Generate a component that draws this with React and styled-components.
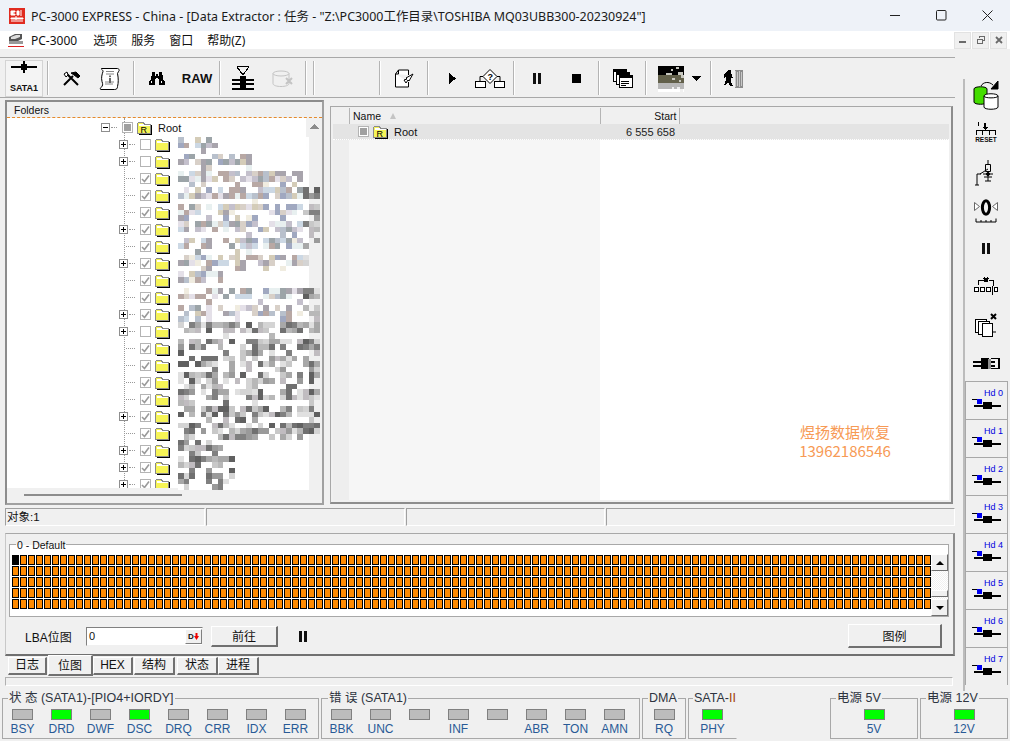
import React from "react";
import styled, { createGlobalStyle } from "styled-components";

const GlobalStyle = createGlobalStyle`
  html, body { margin: 0; padding: 0; background: #f0f0f0; }
  body { font-family: "Noto Sans", "Noto Sans CJK SC", sans-serif; overflow: hidden; }
`;

const UI_FONT = `"Liberation Sans", "Noto Sans CJK SC", sans-serif`;

const Window = styled.div`
  position: relative;
  width: 1010px;
  height: 741px;
  overflow: hidden;
  background: #f0f0f0;
  color: #111;
`;

const TitleBar = styled.div`
  height: 31px;
  display: flex;
  align-items: center;
  padding-left: 9px;
  background: #eef2f8;
  font-size: 12.44px;
  color: #1a1a1a;
  white-space: nowrap;
`;
const TitleText = styled.span`
  flex: 1;
  margin-left: 6px;
`;
const Caption = styled.div`
  width: 46px;
  height: 31px;
  display: flex;
  align-items: center;
  justify-content: center;
`;

const MenuBar = styled.div`
  height: 18px;
  display: flex;
  align-items: center;
  background: #fff;
  padding-left: 8px;
  font-size: 12px;
`;
const MenuItem = styled.span`
  margin-left: ${(p) => p.$gap}px;
  white-space: nowrap;
`;
const MdiButtons = styled.div`
  margin-left: auto;
  margin-right: 3px;
  display: flex;
  gap: 1px;
`;
const MdiButton = styled.div`
  width: 17px;
  height: 17px;
  display: flex;
  align-items: center;
  justify-content: center;
  background: #f0f0f0;
  border: 1px solid #e2e2e2;
  box-sizing: border-box;
`;

const Body = styled.div`
  display: flex;
  height: 643px;
`;
const Workspace = styled.div`
  width: 958px;
  display: flex;
  flex-direction: column;
`;

const Toolbar = styled.div`
  margin-top: 8px;
  height: 41px;
  width: 955px;
  display: flex;
  align-items: stretch;
  border-top: 1px solid #a8a8a8;
  border-bottom: 1px solid #a8a8a8;
  box-sizing: border-box;
  padding: 2px 0 0 0;
`;
const ToolGroup = styled.div`
  width: ${(p) => p.$w}px;
  flex: none;
  display: flex;
  align-items: center;
  justify-content: center;
`;
const ToolSep = styled.div`
  width: 2px;
  flex: none;
  background: #b4b4b4;
  border-right: 1px solid #fff;
  box-sizing: border-box;
  margin: 1px 0 2px;
`;
const Tool = styled.div`
  width: ${(p) => p.$w || 40}px;
  height: 36px;
  display: flex;
  align-items: center;
  justify-content: center;
  font: bold 13px ${UI_FONT};
`;
const ActiveTool = styled.div`
  width: 38px;
  height: 37px;
  margin-left: 5px;
  margin-right: auto;
  display: flex;
  align-items: center;
  justify-content: center;
  border: 1px solid #d4d4d4;
  box-sizing: border-box;
  background: #f4f4f4;
`;

const PanelRow = styled.div`
  display: flex;
  height: 410px;
  padding: 2px 0 0 5px;
  box-sizing: border-box;
`;
const TreePanel = styled.div`
  position: relative;
  width: 319px;
  height: 405px;
  box-sizing: border-box;
  border: 2px solid;
  border-color: #8c8c8c #a0a0a0 #a0a0a0 #8c8c8c;
  overflow: hidden;
`;
const TreeHeader = styled.div`
  height: 16px;
  padding-left: 7px;
  font: 10.5px/17px ${UI_FONT};
  border-bottom: 1px dashed #e58a2c;
  box-sizing: border-box;
  background: #f0f0f0;
`;
const TreeBody = styled.div`
  display: flex;
  height: 370px;
`;
const TreeList = styled.div`
  position: relative;
  width: 299px;
  background: #fff;
  overflow: hidden;
  padding-top: 1px;
  box-sizing: border-box;
`;
const GuideLine = styled.div`
  position: absolute;
  left: 117px;
  top: 0;
  bottom: 0;
  border-left: 1px dotted #999;
`;
const TreeRow = styled.div`
  position: relative;
  height: 17px;
  display: flex;
  align-items: center;
  padding-left: ${(p) => (p.$root ? 94 : 112)}px;
  font: 11px ${UI_FONT};
`;
const Expander = styled.div`
  width: 9px;
  height: 9px;
  flex: none;
  border: 1px solid #8e8e8e;
  background: #fff;
  box-sizing: border-box;
  display: flex;
  align-items: center;
  justify-content: center;
  position: relative;
  &::before {
    content: "";
    position: absolute;
    width: 5px;
    height: 1px;
    background: #000;
  }
  &::after {
    content: "";
    position: absolute;
    width: 1px;
    height: 5px;
    background: #000;
    display: ${(p) => (p.$open ? "none" : "block")};
  }
`;
const NoExpander = styled.div`
  width: 6px;
  flex: none;
`;
const Dots = styled.div`
  width: ${(p) => (p.$long ? 9 : 6)}px;
  margin: 0 5px 0 1px;
  flex: none;
  border-top: 1px dotted #999;
`;
const CheckBox = styled.div`
  width: 11px;
  height: 11px;
  flex: none;
  box-sizing: border-box;
  border: 1px solid #b4b4b4;
  background: #fff;
  display: flex;
  align-items: center;
  justify-content: center;
`;
const RootCheck = styled.div`
  width: 7px;
  height: 7px;
  background: #a0a0a0;
`;
const FolderSlot = styled.div`
  width: 15px;
  height: 14px;
  margin: 0 0 0 4px;
  flex: none;
`;
const RootLabel = styled.span`
  margin-left: 6px;
`;
const TreeScroll = styled.div`
  width: 16px;
  display: flex;
  justify-content: center;
  padding-top: 6px;
  box-sizing: border-box;
`;
const HorizontalBar = styled.div`
  height: 15px;
  padding-left: 17px;
  display: flex;
  align-items: center;
`;
const HorizontalThumb = styled.div`
  width: 158px;
  height: 2px;
  margin-top: -1px;
  background: #8c8c8c;
`;
const Mosaic = styled.svg`
  position: absolute;
  left: 171px;
  top: 35px;
`;

const ListFrame = styled.div`
  width: 623px;
  height: 398px;
  margin: 6px 0 0 6px;
  padding: 1px 2px 2px 2px;
  box-sizing: border-box;
  border: 1px solid #a8a8a8;
  border-right: 2px solid #8c8c8c;
  border-bottom: 2px solid #8c8c8c;
  background: #f0f0f0;
  display: flex;
  flex-direction: column;
  position: relative;
`;
const ListHead = styled.div`
  height: 16px;
  display: flex;
  font: 10.5px/16px ${UI_FONT};
  box-sizing: border-box;
`;
const HeadCell = styled.div`
  width: ${(p) => p.$w}px;
  box-sizing: border-box;
  padding: 0 3px;
  border-left: 1px solid #b4b4b4;
  display: flex;
  align-items: center;
  justify-content: ${(p) => (p.$right ? "flex-end" : "flex-start")};
  gap: 9px;
  &:first-child { border-left: none; }
`;
const SortMark = styled.span`
  width: 0;
  height: 0;
  border-left: 3px solid transparent;
  border-right: 3px solid transparent;
  border-bottom: 6px solid #c4c4c4;
`;
const ListColumns = styled.div`
  flex: 1;
  display: flex;
  min-height: 0;
`;
const Gutter = styled.div`
  width: 16px;
  background: #eeeeee;
  box-sizing: border-box;
`;
const ListBody = styled.div`
  flex: 1;
  position: relative;
  background: linear-gradient(to right, #f6f6f6 0 251px, #fff 251px);
`;
const ListRow = styled.div`
  height: 16px;
  display: flex;
  align-items: center;
  margin-left: -16px;
  background: #e4e4e4;
  border-bottom: 1px dotted #fff;
  box-sizing: border-box;
  font: 11px ${UI_FONT};
`;
const ListName = styled.div`
  width: 267px;
  padding-left: 25px;
  box-sizing: border-box;
  display: flex;
  align-items: center;
`;
const ListStart = styled.div`
  width: 80px;
  padding-right: 5px;
  text-align: right;
  box-sizing: border-box;
  color: #222;
`;
const Watermark = styled.div`
  position: absolute;
  left: 466px;
  top: 315px;
  width: 96px;
  text-align: center;
  color: #f79a55;
  font-size: 15px;
  line-height: 19px;
  font-family: "Noto Sans CJK SC", sans-serif;
`;

const StatusStrip = styled.div`
  height: 18px;
  margin: 0 0 0 5px;
  width: 950px;
  display: flex;
  gap: 1px;
`;
const StatusCell = styled.div`
  width: ${(p) => p.$w}px;
  ${(p) => p.$fill && "flex: 1;"}
  box-sizing: border-box;
  border-top: 1px solid #a0a0a0;
  border-left: 1px solid #a0a0a0;
  border-right: 1px solid #fff;
  border-bottom: 1px solid #fff;
  font: 11.5px/17px ${UI_FONT};
  padding-left: 1px;
`;

const BitmapPanel = styled.div`
  margin: 7px 0 0 5px;
  width: 950px;
  height: 123px;
  box-sizing: border-box;
  border: 1px solid #c8c8c8;
  border-top: 1px solid #a8a8a8;
  border-right: 2px solid #8c8c8c;
  border-bottom: 2px solid #707070;
  padding: 10px 4px 0 3px;
  display: flex;
  flex-direction: column;
`;
const LegendFrame = styled.div`
  position: relative;
  height: 73px;
  flex: none;
  box-sizing: border-box;
  border: 1px solid #a8a8a8;
  background: #fff;
  padding: 10px 0 0 2px;
  display: flex;
`;
const FrameTitle = styled.span`
  position: absolute;
  left: 6px;
  top: -7px;
  font: 10.5px/14px ${UI_FONT};
  background: linear-gradient(to bottom, #f0f0f0 50%, #fff 50%);
  padding: 0 1px;
`;
const BitGrid = styled.div`
  width: 920px;
  height: 55px;
  display: grid;
  grid-template-columns: repeat(115, 8px);
  grid-auto-rows: 11px;
`;
const Bit = styled.div`
  width: 7px;
  height: 10px;
  box-sizing: border-box;
  border: 1px solid #000;
  background: ${(p) => (p.$used ? "#000" : "#ff8a00")};
`;
const VScroll = styled.div`
  position: absolute;
  right: 0;
  top: 9px;
  width: 17px;
  height: 62px;
  display: flex;
  flex-direction: column;
  background: repeating-conic-gradient(#f0f0f0 0 25%, #fff 0 50%) 0 0 / 2px 2px;
`;
const ScrollBtn = styled.div`
  width: 17px;
  height: ${(p) => p.$h || 17}px;
  box-sizing: border-box;
  background: #f0f0f0;
  border: 1px solid;
  border-color: #fff #707070 #707070 #fff;
  display: flex;
  align-items: center;
  justify-content: center;
  margin-top: ${(p) => p.$top || 0}px;
`;
const ArrowGlyph = styled.span`
  width: 0;
  height: 0;
  border-left: 4px solid transparent;
  border-right: 4px solid transparent;
  ${(p) => (p.$down ? "border-top: 4px solid #000;" : "border-bottom: 4px solid #000;")}
`;
const LbaRow = styled.div`
  flex: 1;
  display: flex;
  align-items: center;
  font: 12px ${UI_FONT};
  padding-top: 1px;
`;
const LbaLabel = styled.span`
  width: 77px;
  padding-left: 16px;
  box-sizing: border-box;
  white-space: nowrap;
`;
const LbaInput = styled.div`
  width: 117px;
  height: 19px;
  box-sizing: border-box;
  background: #fff;
  border: 1px solid;
  border-color: #808080 #f0f0f0 #f0f0f0 #808080;
  display: flex;
  align-items: center;
  justify-content: space-between;
  padding-left: 2px;
  font-size: 11px;
`;
const LbaArrow = styled.div`
  width: 17px;
  height: 15px;
  box-sizing: border-box;
  background: #f0f0f0;
  border: 1px solid;
  border-color: #fff #808080 #808080 #fff;
  display: flex;
  align-items: center;
  justify-content: center;
  font: bold 8px/9px ${UI_FONT};
`;
const RaisedButton = styled.div`
  width: ${(p) => p.$w}px;
  height: ${(p) => p.$h}px;
  box-sizing: border-box;
  margin-left: ${(p) => p.$ml || 0}px;
  background: #f0f0f0;
  border: solid;
  border-color: #fff #707070 #707070 #fff;
  border-width: 1px 2px 2px 1px;
  display: flex;
  align-items: center;
  justify-content: center;
  font-size: 12px;
`;
const PauseGlyph = styled.div`
  margin-left: 21px;
  width: 8px;
  height: 11px;
  border-left: 3px solid #111;
  border-right: 3px solid #111;
  box-sizing: border-box;
`;
const Spacer = styled.div`
  flex: 1;
`;
const RightGap = styled.div`
  width: 7px;
  flex: none;
`;

const TabRow = styled.div`
  margin-left: 8px;
  height: 19px;
  display: flex;
  align-items: flex-start;
  font: 12px ${UI_FONT};
`;
const Tab = styled.div`
  width: ${(p) => p.$w}px;
  margin-left: ${(p) => p.$ml || 0}px;
  height: ${(p) => (p.$active ? 21 : 18)}px;
  margin-top: ${(p) => (p.$active ? -1 : 1)}px;
  box-sizing: border-box;
  border: solid;
  border-color: #fff #707070 #707070 #fff;
  border-width: 1px 2px 2px 1px;
  background: #f0f0f0;
  text-align: center;
  line-height: ${(p) => (p.$active ? 20 : 15)}px;
  overflow: hidden;
  white-space: nowrap;
`;
const ProgressStrip = styled.div`
  margin: 2px 0 0 5px;
  width: 948px;
  height: 9px;
  box-sizing: border-box;
  border: 1px solid;
  border-color: #b0b0b0 #fff #fff #b0b0b0;
`;

const SideBar = styled.div`
  width: 47px;
  margin: 30px 0 0 5px;
  border-left: 2px solid #bcbcbc;
  box-sizing: border-box;
  display: flex;
  flex-direction: column;
  align-items: stretch;
`;
const SideTool = styled.div`
  height: ${(p) => p.$h}px;
  display: flex;
  align-items: center;
  justify-content: center;
  padding-right: 3px;
`;
const DriveButton = styled.div`
  height: 38px;
  margin-right: 2px;
  box-sizing: border-box;
  border: solid #a8a8a8;
  border-width: 1px 1px 0 1px;
  position: relative;
  background: #f0f0f0;
  &:first-of-type { margin-top: 1px; }
`;
const DriveLabel = styled.span`
  position: absolute;
  left: 18px;
  top: 6px;
  color: #0000e0;
  font: 9px/11px ${UI_FONT};
  white-space: nowrap;
`;
const DriveGlyph = styled.svg`
  position: absolute;
  left: 6px;
  top: 17px;
`;

const Indicators = styled.div`
  display: flex;
  height: 49px;
  padding-left: 2px;
  box-sizing: border-box;
  font: 12px ${UI_FONT};
`;
const Group = styled.div`
  position: relative;
  width: ${(p) => p.$w}px;
  margin-left: ${(p) => p.$ml || 0}px;
  height: 41px;
  margin-top: 6px;
  box-sizing: border-box;
  border: 1px solid #a8a8a8;
  border-right-color: ${(p) => (p.$open ? "#f0f0f0" : "#a8a8a8")};
  display: grid;
  grid-template-columns: repeat(${(p) => p.$cols || 1}, 39px);
  justify-content: ${(p) => (p.$cols ? "start" : "center")};
  padding-top: 10px;
`;
const GroupTitle = styled.span`
  position: absolute;
  left: ${(p) => p.$left}px;
  top: -8px;
  padding: 0 1px;
  background: #f0f0f0;
  color: #2e3440;
  font-size: 12.5px;
  line-height: 14px;
  white-space: nowrap;
`;
const Led = styled.div`
  display: flex;
  flex-direction: column;
  align-items: center;
  gap: 2px;
  color: #285a96;
  font-size: 12px;
  line-height: 14px;
  min-height: 0;
`;
const Lamp = styled.div`
  width: 21px;
  height: 11px;
  box-sizing: border-box;
  border: 1px solid #808080;
  background: ${(p) => (p.$on ? "#00ff00" : "#bcbcbc")};
`;
const Roman = styled.span`
  color: #a04000;
`;

/* --- drawings --- */
const Px = styled.svg`
  display: block;
  shape-rendering: crispEdges;
`;
const Stack = styled.div`
  text-align: center;
`;
const StackedSvg = styled(Px)`
  margin: 0 auto 1px;
`;
const SataLabel = styled.span`
  font: bold 9px/10px ${UI_FONT};
`;
const ResetLabel = styled.span`
  display: block;
  font: bold 6.5px/8px ${UI_FONT};
`;

const AppIcon = () => (
  <svg width="16" height="16" viewBox="0 0 16 16">
    <rect width="16" height="16" fill="#e02b20" />
    <path d="M2 3h4v1H4v2h2v1H2zM8 3h2v4H8zM12 2v6M2 10h12v1H2zM7 8v4M2 13h12" stroke="#fff" strokeWidth="1" fill="#fff" />
  </svg>
);
const MenuIcon = () => (
  <svg width="16" height="14" viewBox="0 0 16 14">
    <path d="M1 4l6-3h7v5l-6 3H1z" fill="#555" />
    <path d="M3 4l5-2h4v2l-5 2H3z" fill="#ddd" />
    <rect x="1" y="8" width="14" height="3" fill="#999" />
    <rect x="0" y="13" width="16" height="1" fill="#d22" />
  </svg>
);
const SataIcon = () => (
  <Stack>
    <StackedSvg width="28" height="12" viewBox="0 0 28 12">
      <rect x="1" y="5" width="26" height="2" fill="#000" />
      <rect x="11" y="3" width="6" height="6" fill="#000" />
      <rect x="13" y="0" width="2" height="12" fill="#000" />
    </StackedSvg>
    <SataLabel>SATA1</SataLabel>
  </Stack>
);
const ToolsIcon = () => (
  <svg width="18" height="16" viewBox="0 0 18 16" fill="none" stroke="#000">
    <path d="M1 14L10 5M3 2l12 12" strokeWidth="2" />
    <path d="M8 2l5-1 4 4-2 2-4-3z" fill="#000" strokeWidth="1" />
    <path d="M1 3l3-2 1 3-2 2z" fill="#fff" strokeWidth="1" />
  </svg>
);
const ScrollIcon = () => (
  <svg width="22" height="24" viewBox="0 0 22 24" fill="#fff" stroke="#000">
    <path d="M2.5 1.5h16c2 0 2 3 1 3l-1 2c1 5 1 9 0 13 0 2-1 3-3 3H2c-1 0-1-1 0-2 2-2 2-3 1-6-1-4 0-7 1-10 0-2-2-2-1.5-3z" />
    <path d="M7 4.5h8M7 7h8M6 15h9M6 17h8" stroke="#888" />
    <rect x="10" y="11" width="2" height="5" fill="#666" stroke="none" />
    <rect x="10" y="8.5" width="2" height="1.6" fill="#666" stroke="none" />
  </svg>
);
const BinocularIcon = () => (
  <Px width="16" height="14" viewBox="0 0 16 14">
    <path d="M3 0h3v4h4V0h3v3l1 1v3l2 3v3h-6V7H9V6H7v1H6v6H0v-3l2-3V4l1-1z" fill="#000" />
    <rect x="7" y="2" width="2" height="2" fill="#000" />
    <rect x="2" y="9" width="1" height="2" fill="#fff" />
    <rect x="12" y="9" width="1" height="2" fill="#fff" />
  </Px>
);
const ValveIcon = () => (
  <Px width="24" height="26" viewBox="0 0 24 26">
    <path d="M6 0.5h12M6 1l6 8 6-8" fill="none" stroke="#000" />
    <rect x="1" y="13" width="22" height="2" fill="#000" />
    <rect x="1" y="17" width="22" height="2" fill="#000" />
    <rect x="1" y="22" width="22" height="2" fill="#000" />
    <rect x="9" y="10" width="6" height="13" fill="#000" />
  </Px>
);
const DiskOffIcon = () => (
  <svg width="24" height="18" viewBox="0 0 24 18" fill="none" stroke="#c4c4c4">
    <ellipse cx="10" cy="3.5" rx="8" ry="2.5" />
    <path d="M2 3.5v10c0 2 4 3 8 3s8-1 8-3v-10" />
    <path d="M15 8l3 3m3-3l-3 3m0 0l3 3m-3-3l-3 3" strokeWidth="2" />
  </svg>
);
const DocIcon = () => (
  <svg width="21" height="19" viewBox="0 0 21 19" fill="#fff" stroke="#000">
    <path d="M1.5 5l3-4h10v5M1.5 5h3V1M1.5 5v13h13v-5" />
    <path d="M19 5l-7 4 1 1-3 1 2 3 2-3 1 1z" fill="#fff" />
  </svg>
);
const PlayIcon = () => (
  <Px width="7" height="11" viewBox="0 0 7 11">
    <path d="M0 0l7 5.5L0 11z" fill="#000" />
  </Px>
);
const FlowIcon = () => (
  <svg width="30" height="20" viewBox="0 0 30 20" fill="#fff" stroke="#000" strokeWidth="1">
    <path d="M15 0.5l7 7-7 7-7-7z" />
    <rect x="0.5" y="12.5" width="10" height="6" />
    <rect x="19.5" y="12.5" width="10" height="6" />
    <path d="M8 7.5H5v5M22 7.5h3v5" fill="none" />
    <text x="12.6" y="11" fontSize="9" fontWeight="bold" fontFamily="Liberation Sans" fill="#000" stroke="none">?</text>
  </svg>
);
const PauseIcon = () => (
  <Px width="8" height="11" viewBox="0 0 8 11">
    <rect width="3" height="11" fill="#111" />
    <rect x="5" width="3" height="11" fill="#111" />
  </Px>
);
const StopIcon = () => (
  <Px width="9" height="9" viewBox="0 0 9 9">
    <rect width="9" height="9" fill="#000" />
  </Px>
);
const WindowsIcon = () => (
  <Px width="20" height="20" viewBox="0 0 20 20">
    {[0, 3, 6].map((d) => (
      <g key={d} transform={`translate(${d} ${d})`}>
        <rect x="0.5" y="0.5" width="13" height="12" fill="#fff" stroke="#000" />
        <rect x="1" y="1" width="12" height="2" fill="#000" />
      </g>
    ))}
    <path d="M8 12h8M8 14h8M8 16h5" stroke="#000" />
  </Px>
);
const PictureIcon = () => (
  <Px width="26" height="26" viewBox="0 0 26 26">
    <rect width="26" height="9" fill="#000" />
    <rect y="9" width="26" height="8" fill="#62604a" />
    <rect y="17" width="26" height="6" fill="#b8b8b8" />
    <rect y="23" width="26" height="3" fill="#fff" />
    <path d="M13 3h2v2h-2zM18 1h3v2h-3zM8 7h6v2H8zM20 6h5v3h-5zM21 14h2v2h-2zM23 9h3v3h-3zM14 12h3v2h-3z" fill="#c8c8c0" />
    <path d="M19 21h3v2h-3zM22 23h3v3h-3zM14 21h2v2h-2z" fill="#f0f0f0" />
  </Px>
);
const DownCaret = () => (
  <Px width="9" height="5" viewBox="0 0 9 5">
    <path d="M0 0h9L4.5 5z" fill="#000" />
  </Px>
);
const WalkIcon = () => (
  <Px width="19" height="18" viewBox="0 0 19 18">
    <path d="M4 0h3v3H6l2 2 1 3H7v4l2 4H6l-2-4-2 3H0l2-5V6L0 8V5z" fill="#000" />
    <rect x="11" y="0" width="8" height="18" fill="#8c8c8c" />
    <path d="M11 1h1v16h-1zM13 2h1v14h-1zM15 1h1v16h-1zM17 2h1v14h-1z" fill="#c8c8c8" />
  </Px>
);
const FolderIcon = ({ root }) => (
  <Px width="15" height="14" viewBox="0 0 15 14">
    <rect x="14" y="4" width="1" height="10" fill="#000" />
    <rect x="2" y="13" width="13" height="1" fill="#000" />
    <path d="M0.5 12.5V2.5l1-1h5l1 2h6v9z" fill="#f6f456" stroke="#8a8a8a" />
    <path d="M2 3h4.5l.5 1h6v1H2z" fill="#fff" />
    {root && <text x="3.5" y="11.5" fontSize="9" fontFamily="Liberation Sans" fill="#000" stroke="none">R</text>}
  </Px>
);
const CheckMark = () => (
  <svg width="9" height="9" viewBox="0 0 9 9" fill="none" stroke="#9a9a9a" strokeWidth="1.6">
    <path d="M1 5l2.5 2.5L8 1.5" />
  </svg>
);
const ScrollUp = () => (
  <Px width="9" height="5" viewBox="0 0 9 5">
    <path d="M4.5 0L9 5H0z" fill="#8c8c8c" />
  </Px>
);

const DbSwapIcon = () => (
  <svg width="26" height="30" viewBox="0 0 26 30" stroke="#000">
    <path d="M1 8c0-3 13-3 13 0v13c0 3-13 3-13 0z" fill="#44dd00" />
    <path d="M11 15c0-3 14-3 14 0v11c0 3-14 3-14 0z" fill="#fff" />
    <path d="M11 15c0 2.5 14 2.5 14 0" fill="none" />
    <path d="M8 5c2-4 8-5 12-1" fill="none" />
    <path d="M25 0v8h-7z" fill="#000" />
  </svg>
);
const ResetIcon = () => (
  <Stack>
    <StackedSvg width="20" height="13" viewBox="0 0 20 13">
      <path d="M2 0h1v4H2zM8 1h2v4h2L9 8 6 5h2z" fill="#000" />
      <rect x="0.5" y="8.5" width="19" height="4.5" fill="none" stroke="#000" />
      <path d="M6.5 8v5M13.5 8v5" stroke="#000" />
    </StackedSvg>
    <ResetLabel>RESET</ResetLabel>
  </Stack>
);
const SwitchIcon = () => (
  <svg width="24" height="26" viewBox="0 0 24 26" fill="none" stroke="#000">
    <path d="M1 25h4M3 25V14h4M6 14l8-5M14 0v4M11.5 4.5h5v7h-5zM14 12v9M9 14h10M10 17h8M11 21h6" />
    <circle cx="14" cy="14" r="1.5" fill="#000" />
  </svg>
);
const ZeroIcon = () => (
  <svg width="24" height="24" viewBox="0 0 24 24">
    <path d="M0.5 3.5l5 4-5 4z M23.5 3.5l-5 4 5 4z" fill="#fff" stroke="#666" />
    <ellipse cx="12" cy="8.5" rx="3.6" ry="6.8" fill="none" stroke="#000" strokeWidth="3" />
    <path d="M2 19.5v3.5h20v-3.5M7 21v2M12 21v2M17 21v2" fill="none" stroke="#000" />
  </svg>
);
const BitsIcon = () => (
  <Px width="24" height="18" viewBox="0 0 24 18">
    <path d="M4 8V3.5h6M15 3.5h4V9" fill="none" stroke="#000" />
    <path d="M10 1l4 4M14 1l-4 4" stroke="#000" strokeWidth="2" />
    <path d="M0.5 10.5h4v4h-4zM6.5 10.5h4v4h-4zM12.5 10.5h4v4h-4zM20.5 10.5h3v4h-3z" fill="#fff" stroke="#000" />
    <rect x="18" y="9" width="1" height="9" fill="#000" />
  </Px>
);
const PagesIcon = () => (
  <svg width="24" height="24" viewBox="0 0 24 24" stroke="#000" fill="#fff">
    <rect x="1.5" y="6.5" width="11" height="13" />
    <rect x="4.5" y="8.5" width="11" height="13" />
    <rect x="8.5" y="10.5" width="10" height="13" />
    <path d="M19 19h3" />
    <path d="M17 1l5 5m0-5l-5 5" strokeWidth="2" />
  </svg>
);
const ProbeIcon = () => (
  <Px width="27" height="13" viewBox="0 0 27 13">
    <rect x="0" y="4" width="22" height="2" fill="#000" />
    <rect x="0" y="8" width="22" height="2" fill="#000" />
    <rect x="8" y="1" width="8" height="11" fill="#000" />
    <rect x="15" y="2" width="3" height="10" fill="#909090" />
    <path d="M18 1.5h8v10h-8M25.5 1v11" fill="none" stroke="#000" />
  </Px>
);
const MinIcon = styled(Px)`
  margin-top: 5px;
`;
const RestoreIcon = () => (
  <Px width="8" height="8" viewBox="0 0 8 8">
    <path d="M2.5 2V.5h5v4H6M.5 3h5v4.5h-5z" fill="none" stroke="#6a6a6a" />
  </Px>
);
const CloseIcon = () => (
  <svg width="8" height="8" viewBox="0 0 8 8">
    <path d="M1 1l6 6M7 1L1 7" stroke="#6a6a6a" strokeWidth="1.8" />
  </svg>
);
const DownRed = () => (
  <>
    <span>D</span>
    <svg width="5" height="7" viewBox="0 0 5 7"><path d="M1.5 0h2v3H5L2.5 7 0 3h1.5z" fill="#e00" /></svg>
  </>
);

/* --- data --- */
const treeRows = [
  { x: 1, c: 0 }, { x: 1, c: 0 }, { x: 0, c: 1 }, { x: 0, c: 1 }, { x: 0, c: 1 },
  { x: 1, c: 1 }, { x: 0, c: 1 }, { x: 1, c: 1 }, { x: 0, c: 1 }, { x: 0, c: 1 },
  { x: 1, c: 1 }, { x: 1, c: 0 }, { x: 0, c: 1 }, { x: 0, c: 1 }, { x: 0, c: 1 },
  { x: 0, c: 1 }, { x: 1, c: 1 }, { x: 0, c: 1 }, { x: 1, c: 1 }, { x: 1, c: 1 },
  { x: 1, c: 1 },
];

// blurred file names: how many mosaic blocks wide each tree row is
const mosaicWidths = [7, 13, 22, 25, 25, 25, 25, 23, 8, 25, 25, 25, 25, 25, 25, 25, 25, 25, 8, 10, 10];
const pastel = ["#a8a4ac", "#c4c0cc", "#b8c0cc", "#d8d0c8", "#ccd8e4", "#e4e0e8", "#9ca4a8", "#b8a8a4", "#d4ccb8", "#a0a8c0", "#f0ece0", "#e8f0f0"];
const greys = ["#9a9a9a", "#b8b8b8", "#c8c8c8", "#a8a8a8", "#e0e0e0", "#d4d4d4", "#808080", "#707070", "#c0bcc0", "#606060"];

const buildMosaic = () => {
  let seed = 17;
  const next = () => {
    seed = (seed * 16807) % 2147483647;
    return seed / 2147483647;
  };
  const cells = [];
  mosaicWidths.forEach((w, item) => {
    for (let r = 0; r < 3; r++) {
      for (let col = 0; col < w; col++) {
        const edge = col >= 22;
        const density = r === 2 ? 0.3 : 0.72;
        if (next() > density) continue;
        const palette = edge || item >= 11 ? greys : pastel;
        cells.push({ x: col, y: item * 3 + r, fill: palette[Math.floor(next() * palette.length)] });
      }
    }
  });
  return cells;
};
const mosaicCells = buildMosaic();
const bits = Array.from({ length: 575 }, (_, i) => i);

const statusLeds = [["BSY"], ["DRD", 1], ["DWF"], ["DSC", 1], ["DRQ"], ["CRR"], ["IDX"], ["ERR"]];
const errorLeds = ["BBK", "UNC", "", "INF", "", "ABR", "TON", "AMN"];
const sideToolHeights = [34, 40, 40, 36, 38, 38, 40, 36];
const sideIcons = [DbSwapIcon, ResetIcon, SwitchIcon, ZeroIcon, PauseIcon, BitsIcon, PagesIcon, ProbeIcon];

const TreeItem = ({ row }) => (
  <TreeRow>
    {row.x ? <Expander /> : <NoExpander />}
    <Dots $long={!row.x} />
    <CheckBox>{row.c ? <CheckMark /> : null}</CheckBox>
    <FolderSlot>
      <FolderIcon />
    </FolderSlot>
  </TreeRow>
);

const App = () => (
  <Window>
    <GlobalStyle />
    <TitleBar>
      <AppIcon />
      <TitleText>PC-3000 EXPRESS - China - [Data Extractor : 任务 - "Z:\PC3000工作目录\TOSHIBA MQ03UBB300-20230924"]</TitleText>
      <Caption>
        <svg width="11" height="11" viewBox="0 0 11 11"><path d="M0 5.5h10" stroke="#222" /></svg>
      </Caption>
      <Caption>
        <svg width="11" height="11" viewBox="0 0 11 11"><rect x="0.5" y="0.5" width="9.5" height="9.5" rx="1" fill="none" stroke="#222" /></svg>
      </Caption>
      <Caption>
        <svg width="11" height="11" viewBox="0 0 11 11"><path d="M0.5 0.5l10 10m0-10l-10 10" stroke="#222" /></svg>
      </Caption>
    </TitleBar>

    <MenuBar>
      <MenuIcon />
      <MenuItem $gap={7}>PC-3000</MenuItem>
      <MenuItem $gap={16}>选项</MenuItem>
      <MenuItem $gap={14}>服务</MenuItem>
      <MenuItem $gap={14}>窗口</MenuItem>
      <MenuItem $gap={14}>帮助(Z)</MenuItem>
      <MdiButtons>
        <MdiButton>
          <MinIcon width="7" height="3" viewBox="0 0 7 3"><rect width="7" height="2" fill="#6a6a6a" /></MinIcon>
        </MdiButton>
        <MdiButton><RestoreIcon /></MdiButton>
        <MdiButton><CloseIcon /></MdiButton>
      </MdiButtons>
    </MenuBar>

    <Body>
      <Workspace>
        <Toolbar>
          <ToolGroup $w={47}><ActiveTool><SataIcon /></ActiveTool></ToolGroup>
          <ToolSep />
          <ToolGroup $w={84}>
            <Tool $w={38}><ToolsIcon /></Tool>
            <Tool $w={38}><ScrollIcon /></Tool>
          </ToolGroup>
          <ToolSep />
          <ToolGroup $w={84}>
            <Tool><BinocularIcon /></Tool>
            <Tool>RAW</Tool>
          </ToolGroup>
          <ToolSep />
          <ToolGroup $w={84}>
            <Tool><ValveIcon /></Tool>
            <Tool><DiskOffIcon /></Tool>
          </ToolGroup>
          <ToolSep />
          <ToolGroup $w={6} />
          <ToolSep />
          <ToolGroup $w={64} />
          <ToolSep />
          <ToolGroup $w={46}><Tool><DocIcon /></Tool></ToolGroup>
          <ToolSep />
          <ToolGroup $w={84}>
            <Tool $w={38}><PlayIcon /></Tool>
            <Tool $w={38}><FlowIcon /></Tool>
          </ToolGroup>
          <ToolSep />
          <ToolGroup $w={83}>
            <Tool $w={39}><PauseIcon /></Tool>
            <Tool $w={39}><StopIcon /></Tool>
          </ToolGroup>
          <ToolSep />
          <ToolGroup $w={45}><Tool><WindowsIcon /></Tool></ToolGroup>
          <ToolSep />
          <ToolGroup $w={63}>
            <Tool $w={36}><PictureIcon /></Tool>
            <Tool $w={16}><DownCaret /></Tool>
          </ToolGroup>
          <ToolSep />
          <ToolGroup $w={42}><Tool><WalkIcon /></Tool></ToolGroup>
        </Toolbar>

        <PanelRow>
          <TreePanel>
            <TreeHeader>Folders</TreeHeader>
            <TreeBody>
              <TreeList>
                <GuideLine />
                <TreeRow $root>
                  <Expander $open />
                  <Dots />
                  <CheckBox><RootCheck /></CheckBox>
                  <FolderSlot><FolderIcon root /></FolderSlot>
                  <RootLabel>Root</RootLabel>
                </TreeRow>
                {treeRows.map((row, i) => (
                  <TreeItem key={i} row={row} />
                ))}
              </TreeList>
              <TreeScroll><ScrollUp /></TreeScroll>
            </TreeBody>
            <HorizontalBar><HorizontalThumb /></HorizontalBar>
            <Mosaic width="142" height="353" viewBox="0 0 25 63" preserveAspectRatio="none" shapeRendering="crispEdges">
              <rect x="0" y="0" width="23" height="63" fill="#fff" />
              {mosaicCells.map((c, i) => (
                <rect key={i} x={c.x} y={c.y} width="1" height="1" fill={c.fill} />
              ))}
            </Mosaic>
          </TreePanel>

          <ListFrame>
            <ListHead>
              <HeadCell $w={16} />
              <HeadCell $w={251}>Name <SortMark /></HeadCell>
              <HeadCell $w={80} $right>Start</HeadCell>
              <HeadCell $w={270} />
            </ListHead>
            <ListColumns>
              <Gutter />
              <ListBody>
                <ListRow>
                  <ListName>
                    <CheckBox><RootCheck /></CheckBox>
                    <FolderSlot><FolderIcon root /></FolderSlot>
                    <RootLabel>Root</RootLabel>
                  </ListName>
                  <ListStart>6 555 658</ListStart>
                </ListRow>
              </ListBody>
            </ListColumns>
            <Watermark>煜扬数据恢复<br />13962186546</Watermark>
          </ListFrame>
        </PanelRow>

        <StatusStrip>
          <StatusCell $w={200}>对象:1</StatusCell>
          <StatusCell $w={199} />
          <StatusCell $w={199} />
          <StatusCell $fill />
        </StatusStrip>

        <BitmapPanel>
          <LegendFrame>
            <FrameTitle>0 - Default</FrameTitle>
            <BitGrid>
              {bits.map((i) => (
                <Bit key={i} $used={i === 0} />
              ))}
            </BitGrid>
            <VScroll>
              <ScrollBtn><ArrowGlyph /></ScrollBtn>
              <ScrollBtn $h={7} $top={19} />
              <ScrollBtn $top={2}><ArrowGlyph $down /></ScrollBtn>
            </VScroll>
          </LegendFrame>
          <LbaRow>
            <LbaLabel>LBA位图</LbaLabel>
            <LbaInput>
              0
              <LbaArrow><DownRed /></LbaArrow>
            </LbaInput>
            <RaisedButton $w={67} $h={21} $ml={8}>前往</RaisedButton>
            <PauseGlyph />
            <Spacer />
            <RaisedButton $w={94} $h={24}>图例</RaisedButton>
            <RightGap />
          </LbaRow>
        </BitmapPanel>

        <TabRow>
          <Tab $w={39}>日志</Tab>
          <Tab $w={45} $ml={1} $active>位图</Tab>
          <Tab $w={40}>HEX</Tab>
          <Tab $w={41} $ml={1}>结构</Tab>
          <Tab $w={41} $ml={2}>状态</Tab>
          <Tab $w={41}>进程</Tab>
        </TabRow>
        <ProgressStrip />
      </Workspace>

      <SideBar>
        {sideIcons.map((Icon, i) => (
          <SideTool key={i} $h={sideToolHeights[i]}><Icon /></SideTool>
        ))}
        {[0, 1, 2, 3, 4, 5, 6, 7].map((n) => (
          <DriveButton key={n}>
            <DriveLabel>Hd {n}</DriveLabel>
            <DriveGlyph width="29" height="12" viewBox="0 0 29 12" shapeRendering="crispEdges">
              <rect x="0" y="0" width="6" height="1" fill="#000" />
              <rect x="5" y="0" width="5" height="5" fill="#0000f0" />
              <rect x="2" y="6" width="27" height="2" fill="#000" />
              <rect x="11" y="3" width="9" height="7" fill="#000" />
            </DriveGlyph>
          </DriveButton>
        ))}
      </SideBar>
    </Body>

    <Indicators>
      <Group $w={317} $cols={8}>
        <GroupTitle $left={5}>状 态 (SATA1)-[PIO4+IORDY]</GroupTitle>
        {statusLeds.map(([name, on]) => (
          <Led key={name}>
            <Lamp $on={on} />
            {name}
          </Led>
        ))}
      </Group>
      <Group $w={319} $ml={2} $cols={8}>
        <GroupTitle $left={6}>错 误 (SATA1)</GroupTitle>
        {errorLeds.map((name, i) => (
          <Led key={i}>
            <Lamp />
            {name}
          </Led>
        ))}
      </Group>
      <Group $w={44} $ml={2}>
        <GroupTitle $left={5}>DMA</GroupTitle>
        <Led><Lamp />RQ</Led>
      </Group>
      <Group $w={49} $ml={2} $open>
        <GroupTitle $left={4}>SATA-<Roman>II</Roman></GroupTitle>
        <Led><Lamp $on />PHY</Led>
      </Group>
      <Group $w={88} $ml={93}>
        <GroupTitle $left={5}>电源 5V</GroupTitle>
        <Led><Lamp $on />5V</Led>
      </Group>
      <Group $w={88} $ml={2}>
        <GroupTitle $left={5}>电源 12V</GroupTitle>
        <Led><Lamp $on />12V</Led>
      </Group>
    </Indicators>
  </Window>
);

export default App;
